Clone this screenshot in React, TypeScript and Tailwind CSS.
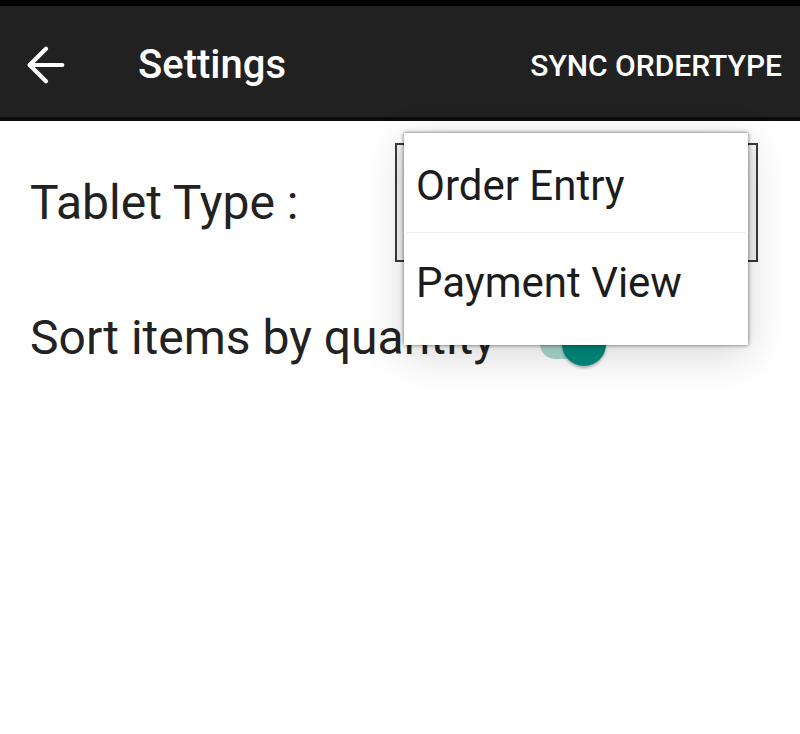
import { ArrowLeft } from "lucide-react";

export default function App() {
  return (
    <div className="relative w-[800px] h-[734px] bg-white overflow-hidden font-['Roboto',sans-serif]">
      {/* status strip */}
      <div className="h-[6px] bg-black" />

      {/* app bar */}
      <div className="h-[115px] pt-[7px] bg-[#212121] border-b-4 border-[#0b0b0b] flex items-center">
        <ArrowLeft size={56} strokeWidth={1.8} className="ml-[18px] text-white" />
        <span className="ml-[64px] text-[40px] font-medium text-white">Settings</span>
        <span className="ml-auto mr-[18px] text-[30px] font-medium text-white">
          SYNC ORDERTYPE
        </span>
      </div>

      {/* settings rows */}
      <div className="flex flex-col pl-[30px] pt-[22px] text-[#222]">
        <div className="flex items-center h-[119px]">
          <span className="w-[365px] text-[48px] leading-none">Tablet Type :</span>
          <div className="w-[363px] h-[119px] border-2 border-[#3a3a3a] bg-[#f2f2f2]" />
        </div>

        <div className="flex items-center h-[60px] mt-[46px]">
          <span className="text-[48px] leading-none">Sort items by quantity</span>
          {/* switch */}
          <div className="relative ml-[44px] mt-[12px] w-[58px] h-[30px] rounded-full bg-[#a9d8d1]">
            <div className="absolute right-[-8px] top-[-7px] w-[44px] h-[44px] rounded-full bg-[#00897b] shadow-[0_2px_3px_rgba(0,0,0,0.3)]" />
          </div>
        </div>
      </div>

      {/* dropdown popup */}
      <div className="absolute left-[404px] top-[133px] w-[344px] h-[212px] bg-white shadow-[0_0_4px_rgba(0,0,0,0.6),0_10px_40px_rgba(0,0,0,0.16)] flex flex-col">
        <div className="h-[100px] pt-[6px] flex items-center pl-[12px] border-b border-[#ececec] mx-[3px]">
          <span className="text-[42px] text-[#1c1c1c] leading-none -ml-[3px]">Order Entry</span>
        </div>
        <div className="h-[100px] flex items-center pl-[12px]">
          <span className="text-[42px] text-[#1c1c1c] leading-none">Payment View</span>
        </div>
      </div>
    </div>
  );
}
